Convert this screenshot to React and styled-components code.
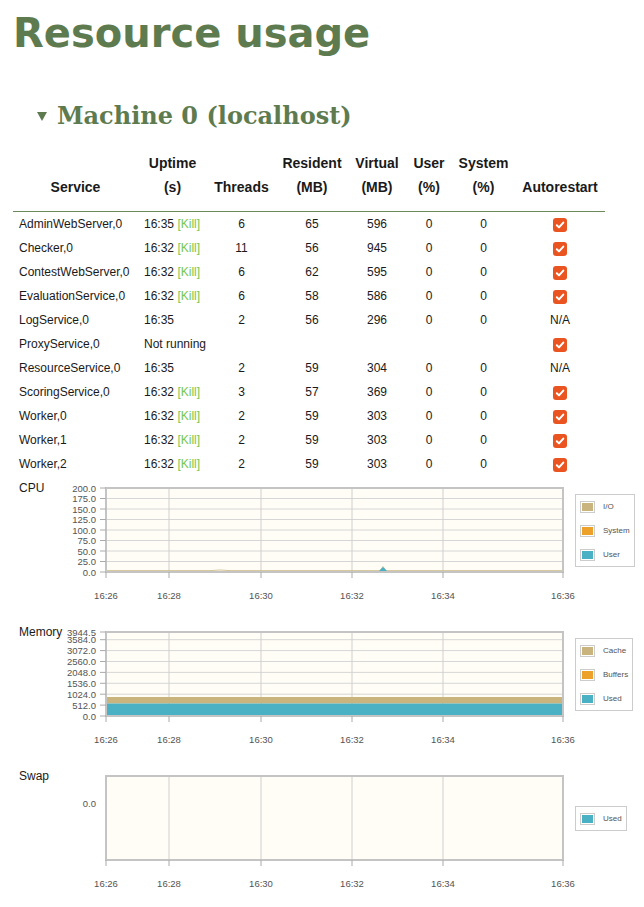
import styled, { createGlobalStyle } from "styled-components";

const GlobalStyle = createGlobalStyle`
  body {
    margin: 0;
    background: #fff;
    font-family: "Liberation Sans", Arial, sans-serif;
    color: #1a1a1a;
  }
`;

const GREEN = "#5e7b4f";
const TAN = "#c8b47c";
const ORANGE = "#eba12a";
const TEAL = "#4ab0c4";

const Page = styled.div`
  width: 644px;
  height: 907px;
  box-sizing: border-box;
  padding: 9px 13px 0;
  overflow: hidden;
`;

const Title = styled.h1`
  margin: 0;
  font: bold 40px/48px "DejaVu Sans", sans-serif;
  color: ${GREEN};
`;

const MachineTitle = styled.h2`
  margin: 45px 0 0;
  padding-left: 24px;
  display: flex;
  align-items: center;
  gap: 10px;
  font: bold 24px/28px "DejaVu Serif", serif;
  color: ${GREEN};
`;

const Arrow = styled.span`
  width: 0;
  height: 0;
  border-left: 5.5px solid transparent;
  border-right: 5.5px solid transparent;
  border-top: 9px solid currentColor;
`;

const Table = styled.table`
  margin-top: 21px;
  width: 592px;
  border-collapse: collapse;
  table-layout: fixed;
  font-size: 12px;
`;

const Th = styled.th`
  font-size: 14px;
  font-weight: bold;
  line-height: 24px;
  padding: 0 0 12px;
  vertical-align: bottom;
  text-align: center;
  border-bottom: 1px solid #6b8a5a;
`;

const Td = styled.td`
  height: 24px;
  line-height: 24px;
  padding: 0 6px;
  white-space: nowrap;
  text-align: ${(p) => (p.$left ? "left" : "center")};
`;

const Kill = styled.span`
  color: #76c84f;
`;

const Check = styled.span`
  display: inline-flex;
  width: 14px;
  height: 14px;
  border-radius: 3px;
  background: #e95420;
  align-items: center;
  justify-content: center;
  vertical-align: middle;
`;

const Charts = styled.div`
  margin-top: 5px;
`;

const ChartRow = styled.div`
  display: flex;
  align-items: flex-start;
  height: 144px;
  padding-left: 6px;
`;

const ChartLabel = styled.div`
  width: 41px;
  flex: none;
  font-size: 12px;
  line-height: 14px;
  white-space: nowrap;
`;

const Plot = styled.svg`
  display: block;
  flex: none;
  font-family: "Liberation Sans", Arial, sans-serif;
`;

const LegendSlot = styled.div`
  height: 98px;
  display: flex;
  align-items: center;
`;

const Legend = styled.div`
  border: 1px solid #ccc;
  background: #fff;
  padding: 6px 4px 5px;
  display: flex;
  flex-direction: column;
  gap: 12px;
`;

const LegendItem = styled.div`
  display: flex;
  align-items: center;
  gap: 8px;
  height: 12px;
  font-size: 8px;
  color: #545454;
`;

const Swatch = styled.span`
  border: 1px solid #ccc;
  padding: 1px;
  display: block;

  &::after {
    content: "";
    display: block;
    width: 11px;
    height: 8px;
    background: ${(p) => p.$color};
  }
`;

const services = [
  ["AdminWebServer,0", "16:35", true, 6, 65, 596, 0, 0, true],
  ["Checker,0", "16:32", true, 11, 56, 945, 0, 0, true],
  ["ContestWebServer,0", "16:32", true, 6, 62, 595, 0, 0, true],
  ["EvaluationService,0", "16:32", true, 6, 58, 586, 0, 0, true],
  ["LogService,0", "16:35", false, 2, 56, 296, 0, 0, null],
  ["ProxyService,0", null, false, null, null, null, null, null, true],
  ["ResourceService,0", "16:35", false, 2, 59, 304, 0, 0, null],
  ["ScoringService,0", "16:32", true, 3, 57, 369, 0, 0, true],
  ["Worker,0", "16:32", true, 2, 59, 303, 0, 0, true],
  ["Worker,1", "16:32", true, 2, 59, 303, 0, 0, true],
  ["Worker,2", "16:32", true, 2, 59, 303, 0, 0, true],
];

const colWidths = [125, 69, 69, 72, 58, 46, 63, 90];

const CheckBox = () => (
  <Check>
    <svg width="10" height="10" viewBox="0 0 10 10">
      <polyline points="1.8,5.2 4,7.4 8.3,2.6" fill="none" stroke="#fff" strokeWidth="2" strokeLinecap="round" strokeLinejoin="round" />
    </svg>
  </Check>
);

// plot geometry, in svg coordinates
const PX0 = 46;
const PX1 = 503;
const PY0 = 7;
const PY1 = 91;
const X_TICKS = [
  [46, "16:26"],
  [109, "16:28"],
  [201, "16:30"],
  [292, "16:32"],
  [383, "16:34"],
  [503, "16:36"],
];

const yOf = (v, max) => PY0 + (PY1 - PY0) * (1 - v / max);

const cpuTicks = [0, 25, 50, 75, 100, 125, 150, 175, 200].map((v) => ({
  y: yOf(v, 200),
  label: v.toFixed(1),
}));

const MEM_MAX = 3944.5;
const memTicks = [0, 512, 1024, 1536, 2048, 2560, 3072, 3584, 3944.5].map((v) => ({
  y: yOf(v, MEM_MAX),
  label: v.toFixed(1),
}));

const Chart = ({ label, ticks, grid = true, showTicks = true, legend, children }) => (
  <ChartRow>
    <ChartLabel>{label}</ChartLabel>
    <Plot width="515" height="144" viewBox="0 0 515 144">
      <rect x={PX0} y={PY0} width={PX1 - PX0} height={PY1 - PY0} fill="#fffdf5" />
      {grid &&
        ticks.map((t) => (
          <line key={t.label} x1={PX0} x2={PX1} y1={t.y} y2={t.y} stroke="#d6d6d6" strokeWidth="1" />
        ))}
      {X_TICKS.slice(1, -1).map(([x]) => (
        <line key={x} x1={x} x2={x} y1={PY0} y2={PY1} stroke="#cfcfcf" strokeWidth="1" />
      ))}
      {children}
      <rect x={PX0} y={PY0} width={PX1 - PX0} height={PY1 - PY0} fill="none" stroke="#c4c4c4" strokeWidth="2" />
      {ticks.map((t) => (
        <g key={t.label}>
          {showTicks && <line x1={40} x2={PX0} y1={t.y} y2={t.y} stroke="#aaa" strokeWidth="1" />}
          <text x="36" y={t.y} fontSize="9.5" fill="#545454" textAnchor="end" dominantBaseline="central">
            {t.label}
          </text>
        </g>
      ))}
      {X_TICKS.map(([x, l]) => (
        <g key={l}>
          <line x1={x} x2={x} y1={PY1} y2={PY1 + 6} stroke="#aaa" strokeWidth="1" />
          <text x={x} y="114" fontSize="9.5" fill="#545454" textAnchor="middle" dominantBaseline="central">
            {l}
          </text>
        </g>
      ))}
    </Plot>
    <LegendSlot>
      <Legend>
        {legend.map(([name, color]) => (
          <LegendItem key={name}>
            <Swatch $color={color} />
            {name}
          </LegendItem>
        ))}
      </Legend>
    </LegendSlot>
  </ChartRow>
);

const App = () => {
  return (
    <Page>
      <GlobalStyle />
      <Title>Resource usage</Title>
      <MachineTitle>
        <Arrow />
        Machine 0 (localhost)
      </MachineTitle>
      <Table>
        <colgroup>
          {colWidths.map((w, i) => (
            <col key={i} style={{ width: w }} />
          ))}
        </colgroup>
        <thead>
          <tr>
            <Th>Service</Th>
            <Th>Uptime<br />(s)</Th>
            <Th>Threads</Th>
            <Th>Resident<br />(MB)</Th>
            <Th>Virtual<br />(MB)</Th>
            <Th>User<br />(%)</Th>
            <Th>System<br />(%)</Th>
            <Th>Autorestart</Th>
          </tr>
        </thead>
        <tbody>
          {services.map(([name, up, kill, th, res, virt, usr, sys, auto]) => (
            <tr key={name}>
              <Td $left>{name}</Td>
              {up === null ? (
                <Td $left colSpan={6}>Not running</Td>
              ) : (
                <>
                  <Td $left>
                    {up}
                    {kill && (
                      <>
                        {" "}
                        <Kill>[Kill]</Kill>
                      </>
                    )}
                  </Td>
                  <Td>{th}</Td>
                  <Td>{res}</Td>
                  <Td>{virt}</Td>
                  <Td>{usr}</Td>
                  <Td>{sys}</Td>
                </>
              )}
              <Td>{auto ? <CheckBox /> : "N/A"}</Td>
            </tr>
          ))}
        </tbody>
      </Table>
      <Charts>
        <Chart
          label="CPU"
          ticks={cpuTicks}
          legend={[
            ["I/O", TAN],
            ["System", ORANGE],
            ["User", TEAL],
          ]}
        >
          <polyline points="46,89.6 150,89.6 160,89 170,89.6 320,89.6 323,85.5 326,89.6 503,89.6" fill="none" stroke={TAN} strokeWidth="0.8" />
          <polygon points="46,91 46,90 319,90 323,86 327,90 503,90 503,91" fill={TEAL} />
        </Chart>
        <Chart
          label="Memory"
          ticks={memTicks}
          legend={[
            ["Cache", TAN],
            ["Buffers", ORANGE],
            ["Used", TEAL],
          ]}
        >
          <rect x={PX0} y="72" width={PX1 - PX0} height="6.5" fill={TAN} />
          <rect x={PX0} y="78.5" width={PX1 - PX0} height="12.5" fill={TEAL} />
        </Chart>
        <Chart
          label="Swap"
          ticks={[{ y: 34, label: "0.0" }]}
          grid={false}
          showTicks={false}
          legend={[["Used", TEAL]]}
        />
      </Charts>
    </Page>
  );
};

export default App;
